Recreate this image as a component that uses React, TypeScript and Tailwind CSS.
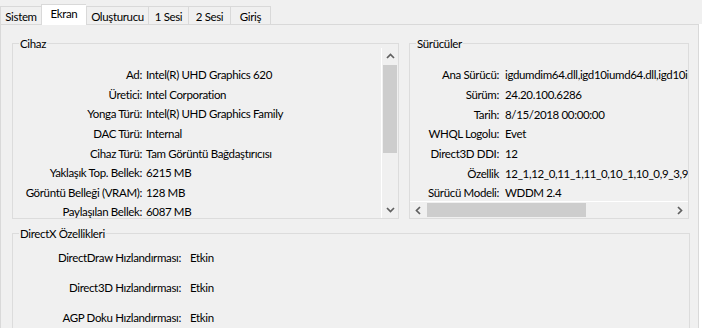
import React from "react";

const FONT = "font-['Lato','Liberation_Sans',sans-serif]";

function Chev({ dir }: { dir: "up" | "down" | "left" | "right" }) {
  const pts: Record<string, string> = {
    up: "1,6 4.5,2.5 8,6",
    down: "1,3 4.5,6.5 8,3",
    left: "6,1 2.5,4.5 6,8",
    right: "3,1 6.5,4.5 3,8",
  };
  return (
    <svg width="9" height="9" viewBox="0 0 9 9" className="block">
      <polyline points={pts[dir]} fill="none" stroke="#606060" strokeWidth="1.7" />
    </svg>
  );
}

const tabs = [
  { t: "Sistem", w: "w-[41px]" },
  { t: "Ekran", w: "w-[45px]", sel: true },
  { t: "Oluşturucu", w: "w-[62px]" },
  { t: "1 Sesi", w: "w-[40px]" },
  { t: "2 Sesi", w: "w-[42px]" },
  { t: "Giriş", w: "w-[41px]", last: true },
];

const device: [string, string][] = [
  ["Ad:", "Intel(R) UHD Graphics 620"],
  ["Üretici:", "Intel Corporation"],
  ["Yonga Türü:", "Intel(R) UHD Graphics Family"],
  ["DAC Türü:", "Internal"],
  ["Cihaz Türü:", "Tam Görüntü Bağdaştırıcısı"],
  ["Yaklaşık Top. Bellek:", "6215 MB"],
  ["Görüntü Belleği (VRAM):", "128 MB"],
  ["Paylaşılan Bellek:", "6087 MB"],
];

const drivers: [string, string][] = [
  ["Ana Sürücü:", "igdumdim64.dll,igd10iumd64.dll,igd10iumd64.dll"],
  ["Sürüm:", "24.20.100.6286"],
  ["Tarih:", "8/15/2018 00:00:00"],
  ["WHQL Logolu:", "Evet"],
  ["Direct3D DDI:", "12"],
  ["Özellik", "12_1,12_0,11_1,11_0,10_1,10_0,9_3,9_2,9_1"],
  ["Sürücü Modeli:", "WDDM 2.4"],
];

const dx: [string, string][] = [
  ["DirectDraw Hızlandırması:", "Etkin"],
  ["Direct3D Hızlandırması:", "Etkin"],
  ["AGP Doku Hızlandırması:", "Etkin"],
];

export default function App() {
  return (
    <div
      className={`${FONT} w-[702px] h-[328px] overflow-hidden bg-[#f0f0f0] text-[11.5px] tracking-[-0.35px] leading-[15px] text-black`}
    >
      {/* Tab strip */}
      <div className="h-[24px] flex items-end">
        {tabs.map((tb) => (
          <div
            key={tb.t}
            className={`${tb.w} shrink-0 flex justify-center border-l border-t border-[#d9d9d9] ${
              tb.last ? "border-r" : ""
            } ${
              tb.sel
                ? "h-[21px] -mb-px relative z-10 bg-white items-center pb-[3px]"
                : "h-[18px] bg-[#f0f0f0] items-center pt-[1px]"
            }`}
          >
            <span className="whitespace-nowrap">{tb.t}</span>
          </div>
        ))}
      </div>

      {/* Panel */}
      <div className="flex h-[304px]">
        <div className="w-[699px] shrink-0 h-full border-l border-t border-r border-[#d9d9d9] bg-[#f0f0f0] pl-[11px] pt-[11px]">
          <div className="flex">
            {/* Cihaz */}
            <fieldset className="w-[387px] min-w-0 shrink-0 h-[183px] border border-[#dcdcdc]">
              <legend className="ml-[6px] px-[1px] leading-[15px]">Cihaz</legend>
              <div className="-mt-[3px] h-[170px] flex">
                <div className="flex-1 min-w-0 overflow-hidden pt-[17px]">
                  {device.map(([l, v]) => (
                    <div key={l} className="h-[19.6px] flex items-center whitespace-nowrap">
                      <span className="w-[129px] shrink-0 text-right">{l}</span>
                      <span className="ml-[4px]">{v}</span>
                    </div>
                  ))}
                </div>
                <div className="w-[17px] shrink-0 border-l border-white flex flex-col bg-[#f0f0f0]">
                  <div className="h-[17px] flex items-center justify-center">
                    <Chev dir="up" />
                  </div>
                  <div className="h-[88px] mx-[1px] bg-[#cdcdcd]" />
                  <div className="flex-1" />
                  <div className="h-[17px] flex items-center justify-center">
                    <Chev dir="down" />
                  </div>
                </div>
              </div>
            </fieldset>

            {/* Sürücüler */}
            <fieldset className="ml-[10px] w-[280px] min-w-0 shrink-0 h-[183px] border border-[#dcdcdc]">
              <legend className="ml-[6px] px-[1px] leading-[15px]">Sürücüler</legend>
              <div className="-mt-[3px] h-[170px] flex flex-col">
                <div className="flex-1 min-w-0 overflow-hidden pt-[17px]">
                  {drivers.map(([l, v]) => (
                    <div key={l} className="h-[19.7px] flex items-center whitespace-nowrap">
                      <span className="w-[89px] shrink-0 text-right">{l}</span>
                      <span className="ml-[6px]">{v}</span>
                    </div>
                  ))}
                </div>
                <div className="h-[17px] shrink-0 border-t border-white flex items-stretch bg-[#f0f0f0]">
                  <div className="w-[17px] flex items-center justify-center">
                    <Chev dir="left" />
                  </div>
                  <div className="w-[159px] my-[1px] bg-[#cdcdcd]" />
                  <div className="flex-1" />
                  <div className="w-[17px] flex items-center justify-center">
                    <Chev dir="right" />
                  </div>
                </div>
              </div>
            </fieldset>
          </div>

          {/* DirectX Özellikleri */}
          <fieldset className="mt-[7px] w-[678px] min-w-0 h-[120px] border border-[#dcdcdc]">
            <legend className="ml-[6px] px-[1px] leading-[15px]">DirectX Özellikleri</legend>
            <div className="pt-[1px]">
              {dx.map(([l, v]) => (
                <div key={l} className="h-[30px] flex items-center whitespace-nowrap">
                  <span className="w-[168px] shrink-0 text-right">{l}</span>
                  <span className="ml-[9px]">{v}</span>
                </div>
              ))}
            </div>
          </fieldset>
        </div>
        <div className="w-[3px] h-full bg-white" />
      </div>
    </div>
  );
}
